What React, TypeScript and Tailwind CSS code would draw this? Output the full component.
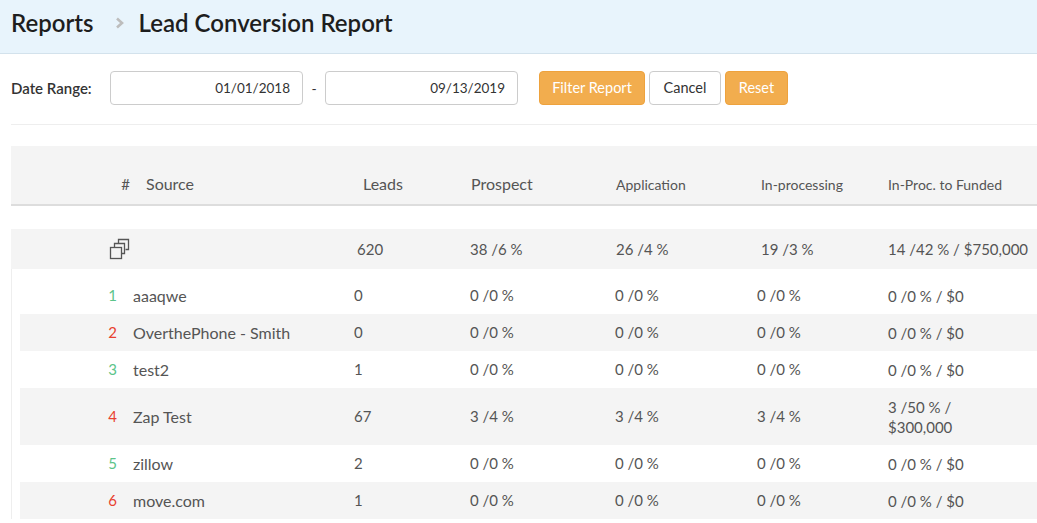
import React from 'react';

const rows = [
  { n: 1, color: 'text-[#5cc48a]', source: 'aaaqwe', leads: '0', prospect: '0 /0 %', app: '0 /0 %', proc: '0 /0 %', funded: '0 /0 % / $0' },
  { n: 2, color: 'text-[#e8412f]', source: 'OverthePhone - Smith', leads: '0', prospect: '0 /0 %', app: '0 /0 %', proc: '0 /0 %', funded: '0 /0 % / $0' },
  { n: 3, color: 'text-[#5cc48a]', source: 'test2', leads: '1', prospect: '0 /0 %', app: '0 /0 %', proc: '0 /0 %', funded: '0 /0 % / $0' },
  { n: 4, color: 'text-[#e8412f]', source: 'Zap Test', leads: '67', prospect: '3 /4 %', app: '3 /4 %', proc: '3 /4 %', funded: '3 /50 % / $300,000' },
  { n: 5, color: 'text-[#5cc48a]', source: 'zillow', leads: '2', prospect: '0 /0 %', app: '0 /0 %', proc: '0 /0 %', funded: '0 /0 % / $0' },
  { n: 6, color: 'text-[#e8412f]', source: 'move.com', leads: '1', prospect: '0 /0 %', app: '0 /0 %', proc: '0 /0 %', funded: '0 /0 % / $0' },
];

function StackIcon() {
  return (
    <svg width="22" height="22" viewBox="0 0 22 22" fill="none" stroke="#555" strokeWidth="1.3" className="shrink-0">
      <path d="M9.5 5.5 V1.5 H19.5 V11.5 H16.5" />
      <path d="M5.5 9.5 V5.5 H15.5 V15.5 H12.5" />
      <rect x="1.5" y="9.5" width="11" height="11" fill="#f4f4f4" />
    </svg>
  );
}

export default function App() {
  return (
    <div className="w-[1037px] h-[523px] overflow-hidden bg-white text-[#555]" style={{ fontFamily: 'Lato, "Noto Sans", sans-serif' }}>
      {/* Title bar */}
      <div className="h-[54px] bg-[#e8f4fc] border-b border-[#d3e2ec] flex items-center pl-[11px] pb-[8px]">
        <span className="text-[24px] font-semibold text-[#1e1e1e]">Reports</span>
        <span className="ml-[21px] mr-[14px]">
          <svg width="10" height="12" viewBox="0 0 10 12"><path d="M2 1.5 L7 6 L2 10.5" stroke="#bdbdbd" strokeWidth="2.6" fill="none" /></svg>
        </span>
        <span className="text-[24px] font-semibold text-[#1e1e1e]">Lead Conversion Report</span>
      </div>

      <div className="pl-[11px]">
        {/* Filters */}
        <div className="flex items-center h-[71px] pb-[2px] border-b border-[#eee]">
          <span className="text-[15px] font-semibold text-[#333] w-[99px]">Date Range:</span>
          <input readOnly value="01/01/2018" className="w-[193px] h-[34px] border border-[#ccc] rounded-[4px] text-right pr-[12px] text-[13.5px] text-[#333] outline-none" />
          <span className="w-[22px] text-center text-[14px] text-[#333]">-</span>
          <input readOnly value="09/13/2019" className="w-[193px] h-[34px] border border-[#ccc] rounded-[4px] text-right pr-[12px] text-[13.5px] text-[#333] outline-none" />
          <button className="ml-[21px] w-[106px] h-[34px] rounded-[4px] bg-[#f2ad4e] border border-[#eea23d] text-white text-[14.5px]">Filter Report</button>
          <button className="ml-[4px] w-[72px] h-[34px] rounded-[4px] bg-white border border-[#ccc] text-[#333] text-[14.5px]">Cancel</button>
          <button className="ml-[4px] w-[63px] h-[34px] rounded-[4px] bg-[#f2ad4e] border border-[#eea23d] text-white text-[14.5px]">Reset</button>
        </div>

        {/* Table */}
        <div className="mt-[21px] w-[1100px]">
          <div className="h-[60px] bg-[#f4f4f4] border-b-2 border-[#ddd] flex items-baseline pt-[26px]">
            <span className="w-[119px] text-right text-[15px]">#</span>
            <span className="ml-[16px] w-[217px] text-[16px]">Source</span>
            <span className="w-[108px] text-[16px]">Leads</span>
            <span className="w-[145px] text-[16px]">Prospect</span>
            <span className="w-[145px] text-[14px]">Application</span>
            <span className="w-[127px] text-[14px]">In-processing</span>
            <span className="text-[14px]">In-Proc. to Funded</span>
          </div>
          <div className="h-[23px]" />
          <div className="h-[40px] bg-[#f4f4f4] flex items-center text-[15px]">
            <span className="ml-[98px] w-[248px] flex"><StackIcon /></span>
            <span className="w-[113px]">620</span>
            <span className="w-[146px]">38 /6 %</span>
            <span className="w-[145px]">26 /4 %</span>
            <span className="w-[127px]">19 /3 %</span>
            <span>14 /42 % / $750,000</span>
          </div>

          <div className="border-l border-[#eee] pl-[8px] pt-[8px]">
            {rows.map((r, i) => (
              <div key={r.n} className={`flex items-center min-h-[37px] text-[15px] ${i % 2 === 1 ? 'bg-[#f4f4f4]' : 'bg-white'}`}>
                <span className={`w-[97px] text-right ${r.color}`}>{r.n}</span>
                <span className="ml-[16px] w-[221px] text-[16px]">{r.source}</span>
                <span className="w-[116px]">{r.leads}</span>
                <span className="w-[145px]">{r.prospect}</span>
                <span className="w-[142px]">{r.app}</span>
                <span className="w-[131px]">{r.proc}</span>
                <span className="w-[112px] leading-[20px] pt-[9px] pb-[8px]">{r.funded}</span>
              </div>
            ))}
          </div>
        </div>
      </div>
    </div>
  );
}
